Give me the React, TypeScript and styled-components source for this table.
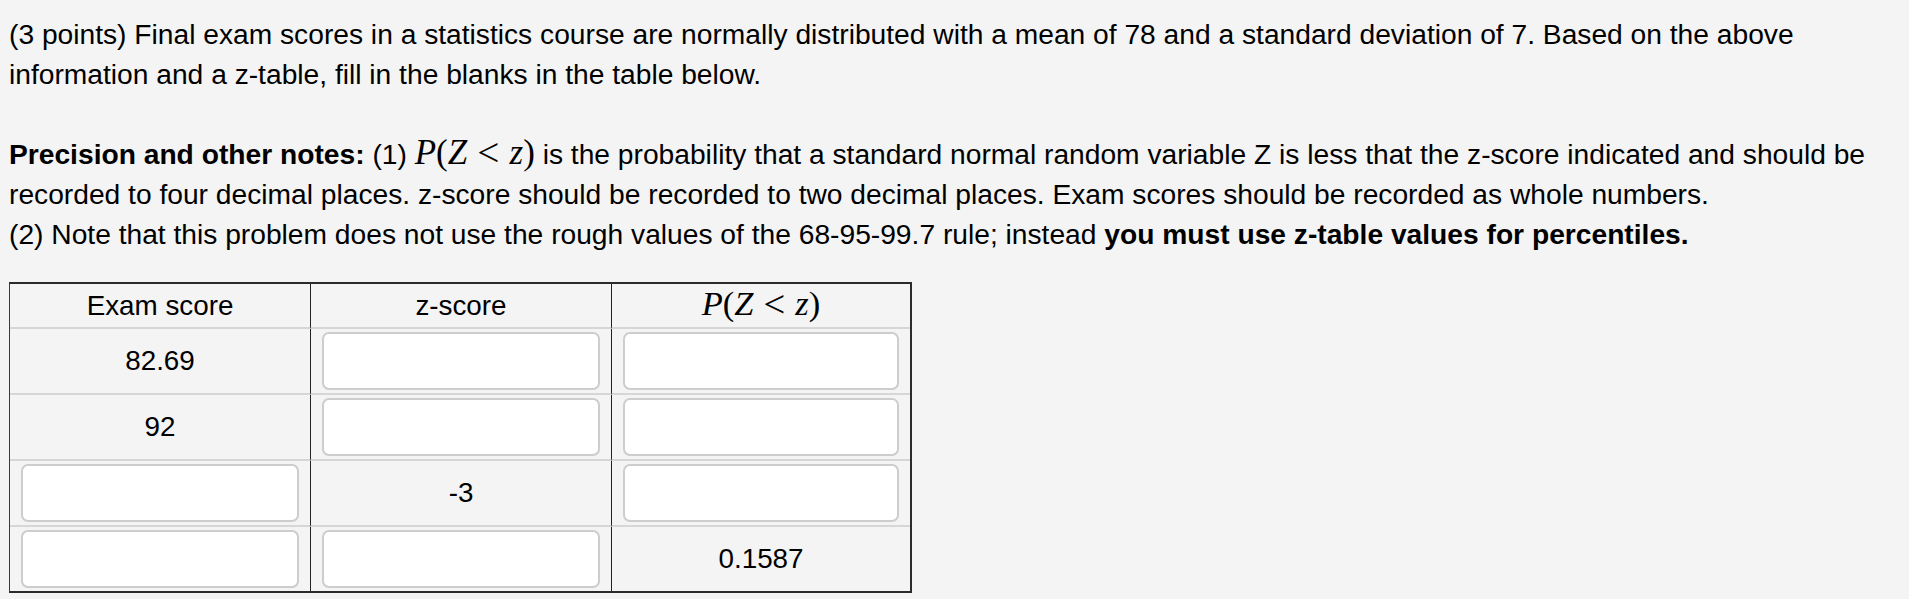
import React from "react";
import styled, { createGlobalStyle } from "styled-components";

const GlobalStyle = createGlobalStyle`
  html, body {
    margin: 0;
    padding: 0;
    background: #f4f4f4;
  }
  body {
    font-family: "Liberation Sans", Arial, Helvetica, sans-serif;
    color: #000;
  }
`;

const Page = styled.div`
  padding: 14px 8px 0 9px;
  font-size: 28.2px;
  line-height: 40px;
`;

const Para = styled.p<{ $gap?: number }>`
  margin: ${(p) => p.$gap ?? 0}px 0 0 0;
`;

const Bold = styled.strong`
  font-weight: 700;
`;

const MathSpan = styled.span`
  font-family: "Liberation Serif", "Times New Roman", serif;
  font-size: 1.24em;
  line-height: 0;
  white-space: nowrap;
`;

const MI = styled.i`
  font-style: italic;
`;

const MO = styled.span<{ $rel?: boolean }>`
  font-style: normal;
  ${(p) =>
    p.$rel
      ? `
    display: inline-block;
    margin: 0 0.26em;
    font-size: 1.12em;
    transform: translateY(0.04em);
  `
      : ""}
`;

const Table = styled.table`
  margin-top: 28px;
  border-collapse: separate;
  border-spacing: 0;
  table-layout: fixed;
  width: 903px;
  border-top: 2px solid #2b2b2b;
  border-right: 2px solid #2b2b2b;
  border-bottom: 2px solid #2b2b2b;
  border-left: 1px solid #3a3a3a;
  font-size: 27.8px;
  line-height: 1.15;
`;

const Col = styled.col<{ $w: number }>`
  width: ${(p) => p.$w}px;
`;

const HeadCell = styled.th`
  font-weight: 400;
  text-align: center;
  height: 43px;
  padding: 0 11px;
  border-bottom: 2px solid #d6d6d6;
  border-right: 1px solid #222;
  &:last-child {
    border-right: none;
  }
`;

const Row = styled.tr`
  &:last-child td {
    border-bottom: none;
  }
`;

const Cell = styled.td`
  text-align: center;
  padding: 3px 11px 3px 11px;
  height: 58px;
  border-bottom: 2px solid #d6d6d6;
  border-right: 1px solid #222;
  &:last-child {
    border-right: none;
  }
`;

const Input = styled.input`
  display: block;
  box-sizing: border-box;
  width: 100%;
  height: 58px;
  margin: 0;
  border: 2px solid #cdcdcd;
  border-radius: 7px;
  background: #fff;
  font-size: 24px;
  font-family: "Liberation Sans", Arial, sans-serif;
  outline: none;
`;

const PZ = () => (
  <MathSpan>
    <MI>P</MI>
    <MO>(</MO>
    <MI>Z</MI>
    <MO $rel>&lt;</MO>
    <MI>z</MI>
    <MO>)</MO>
  </MathSpan>
);

type Val = string | null;
const rows: Val[][] = [
  ["82.69", null, null],
  ["92", null, null],
  [null, "-3", null],
  [null, null, "0.1587"],
];

export default function App() {
  return (
    <>
      <GlobalStyle />
      <Page>
        <Para>
          (3 points) Final exam scores in a statistics course are normally distributed with a mean of 78 and a
          standard deviation of 7. Based on the above information and a z-table, fill in the blanks in the table below.
        </Para>
        <Para $gap={40}>
          <Bold>Precision and other notes:</Bold> (1) <PZ /> is the probability that a standard normal random
          variable Z is less that the z-score indicated and should be recorded to four decimal places. z-score should
          be recorded to two decimal places. Exam scores should be recorded as whole numbers.
          <br />
          (2) Note that this problem does not use the rough values of the 68-95-99.7 rule; instead{" "}
          <Bold>you must use z-table values for percentiles.</Bold>
        </Para>
        <Table>
          <colgroup>
            <Col $w={301} />
            <Col $w={301} />
            <Col $w={298} />
          </colgroup>
          <thead>
            <tr>
              <HeadCell>Exam score</HeadCell>
              <HeadCell>z-score</HeadCell>
              <HeadCell>
                <PZ />
              </HeadCell>
            </tr>
          </thead>
          <tbody>
            {rows.map((r, i) => (
              <Row key={i}>
                {r.map((v, j) => (
                  <Cell key={j}>{v === null ? <Input type="text" aria-label="answer" /> : v}</Cell>
                ))}
              </Row>
            ))}
          </tbody>
        </Table>
      </Page>
    </>
  );
}
